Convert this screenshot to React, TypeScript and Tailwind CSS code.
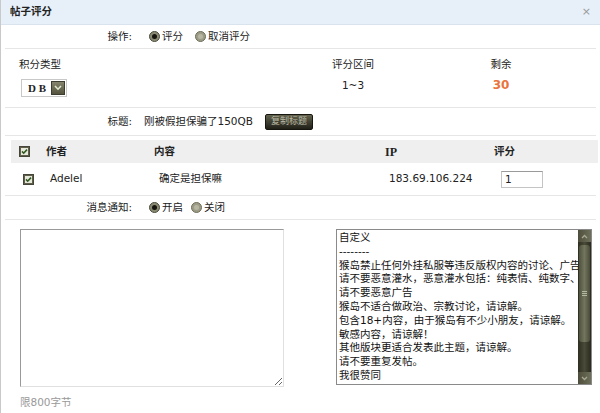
import React from 'react';

const Radio: React.FC<{ on?: boolean }> = ({ on }) => (
    <span className={`inline-flex w-[11px] h-[11px] rounded-full items-center justify-center border ${on ? 'border-[#4b4b3a] bg-[#8a8a74]' : 'border-[#6d6d58] bg-[#9c9c86]'}`}>
        <span className={`w-[5px] h-[5px] rounded-full ${on ? 'bg-[#15150e]' : 'bg-[#b6b6a2]'}`} />
    </span>
);

const CheckBox: React.FC = () => (
    <svg width="11" height="11" viewBox="0 0 11 11" className="block">
        <rect x="0.5" y="0.5" width="10" height="10" fill="#5f5f4a" stroke="#45453a" />
        <rect x="2" y="2" width="7" height="7" fill="#e6e8dc" />
        <path d="M3 5.4 L4.7 7.2 L8 3.6" stroke="#2f5a1f" strokeWidth="1.6" fill="none" />
    </svg>
);

const rules = [
    '自定义',
    '--------',
    '猴岛禁止任何外挂私服等违反版权内容的讨论、广告等',
    '请不要恶意灌水，恶意灌水包括：纯表情、纯数字、纯字母',
    '请不要恶意广告',
    '猴岛不适合做政治、宗教讨论，请谅解。',
    '包含18+内容，由于猴岛有不少小朋友，请谅解。',
    '敏感内容，请谅解！',
    '其他版块更适合发表此主题，请谅解。',
    '请不要重复发帖。',
    '我很赞同',
];

const App: React.FC = () => {
    return (
        <div className="w-[600px] h-[413px] overflow-hidden bg-white border-l border-[#c9c9c9] text-[10.5px] text-[#222] font-['DejaVu_Sans','Noto_Sans_CJK_SC',sans-serif]">
            {/* Header */}
            <div className="h-[25px] bg-[#e7f0f9] border-b border-[#d8e3ee] flex items-center justify-between pl-[9px] pr-[9px]">
                <span className="font-bold">帖子评分</span>
                <span className="text-[#9a9a9a] text-[11px]">×</span>
            </div>

            <div className="mx-[4px]">
                {/* 操作 */}
                <div className="h-[24px] border-b border-[#e6e6e6] flex items-center">
                    <span className="w-[127px] text-right">操作:</span>
                    <span className="ml-[17px] flex items-center gap-[2px]"><Radio on />评分</span>
                    <span className="ml-[12px] flex items-center gap-[2px]"><Radio />取消评分</span>
                </div>

                {/* 积分类型 */}
                <div className="h-[59px] border-b border-[#e6e6e6] flex pl-[14px] pt-[8px]">
                    <div className="w-[294px] flex flex-col">
                        <span className="leading-[14px]">积分类型</span>
                        <div className="mt-[8px] ml-[2px] w-[46px] h-[18px] border border-[#c8c8c8] bg-white flex items-center p-[1px]">
                            <span className="flex-1 pl-[5px] font-['Liberation_Serif',serif] font-bold text-[11px] leading-none">D B</span>
                            <span className="w-[14px] h-[14px] bg-linear-to-b from-[#85856e] to-[#55553f] border border-[#3e3e30] flex items-center justify-center">
                                <svg width="8" height="6" viewBox="0 0 8 6"><path d="M1 1 L4 4.2 L7 1" stroke="#e2ead0" strokeWidth="1.6" fill="none" /></svg>
                            </span>
                        </div>
                    </div>
                    <div className="w-[80px] flex flex-col items-center">
                        <span className="leading-[14px]">评分区间</span>
                        <span className="mt-[7px] leading-[14px]">1~3</span>
                    </div>
                    <div className="ml-[68px] w-[80px] flex flex-col items-center">
                        <span className="leading-[14px]">剩余</span>
                        <span className="mt-[7px] leading-[14px] text-[12px] font-bold text-[#e8743b]">30</span>
                    </div>
                </div>

                {/* 标题 */}
                <div className="h-[28px] border-b border-[#e6e6e6] flex items-center">
                    <span className="w-[127px] text-right">标题:</span>
                    <span className="ml-[12px]">刚被假担保骗了150QB</span>
                    <span className="ml-[12px] w-[48px] h-[16px] rounded-[2px] bg-linear-to-b from-[#63634f] to-[#202018] border border-[#17170f] text-[9px] text-[#b9b9a2] flex items-center justify-center">复制标题</span>
                </div>

                {/* Table */}
                <div className="mt-[4px] ml-[6px] w-[587px] h-[23px] bg-[#efefef] flex items-center font-bold">
                    <span className="w-[35px] pl-[8px]"><CheckBox /></span>
                    <span className="w-[108px]">作者</span>
                    <span className="w-[231px]">内容</span>
                    <span className="w-[109px] font-['Liberation_Serif',serif] text-[12px]">IP</span>
                    <span>评分</span>
                </div>
                <div className="h-[33px] border-b border-[#e6e6e6] flex items-center">
                    <span className="w-[45px] pl-[18px]"><CheckBox /></span>
                    <span className="w-[109px]">Adelel</span>
                    <span className="w-[230px]">确定是担保嘛</span>
                    <span className="w-[112px]">183.69.106.224</span>
                    <input readOnly value="1" className="w-[42px] h-[17px] border border-[#c4c4c4] border-t-[#9a9a9a] px-[3px] outline-none text-[10.5px]" />
                </div>

                {/* 消息通知 */}
                <div className="h-[24px] border-b border-[#e6e6e6] flex items-center">
                    <span className="w-[127px] text-right">消息通知:</span>
                    <span className="ml-[17px] flex items-center gap-[2px]"><Radio on />开启</span>
                    <span className="ml-[8px] flex items-center gap-[2px]"><Radio />关闭</span>
                </div>

                {/* Reason */}
                <div className="mt-[9px] flex items-start">
                    <textarea className="ml-[15px] w-[264px] h-[158px] border border-t-[#999] border-l-[#999] border-r-[#e0e0e0] border-b-[#e0e0e0] outline-none resize-y" />
                    <div className="ml-[52px] w-[256px] h-[156px] border border-[#8a8a8a] flex">
                        <div className="flex-1 overflow-hidden pl-[2px] pt-[1px]">
                            {rules.map((r, i) => (
                                <div key={i} className="whitespace-nowrap leading-[13.8px] text-[10.5px] text-[#111]">{r}</div>
                            ))}
                        </div>
                        <div className="w-[13px] flex flex-col bg-linear-to-r from-[#2e2e22] via-[#4a4a38] to-[#2a2a1f]">
                            <div className="h-[12px] flex items-center justify-center bg-linear-to-r from-[#4e4e3c] to-[#6e705a]">
                                <svg width="7" height="5" viewBox="0 0 7 5"><path d="M1 4 L3.5 1.5 L6 4" stroke="#a8a894" strokeWidth="1.3" fill="none" /></svg>
                            </div>
                            <div className="mt-[3px] mx-[1px] h-[97px] rounded-[3px] bg-linear-to-r from-[#4f513e] via-[#73765d] to-[#4a4c3a] flex flex-col items-center justify-center gap-[1px]">
                                <span className="w-[5px] h-px bg-[#b5b8a0]" />
                                <span className="w-[5px] h-px bg-[#b5b8a0]" />
                                <span className="w-[5px] h-px bg-[#b5b8a0]" />
                            </div>
                            <div className="flex-1" />
                            <div className="h-[12px] flex items-center justify-center bg-linear-to-r from-[#4e4e3c] to-[#6e705a]">
                                <svg width="7" height="5" viewBox="0 0 7 5"><path d="M1 1 L3.5 3.5 L6 1" stroke="#a8a894" strokeWidth="1.3" fill="none" /></svg>
                            </div>
                        </div>
                    </div>
                </div>
                <div className="mt-[8px] ml-[15px] leading-[14px] text-[#999]">限800字节</div>
            </div>
        </div>
    );
};

export default App;
